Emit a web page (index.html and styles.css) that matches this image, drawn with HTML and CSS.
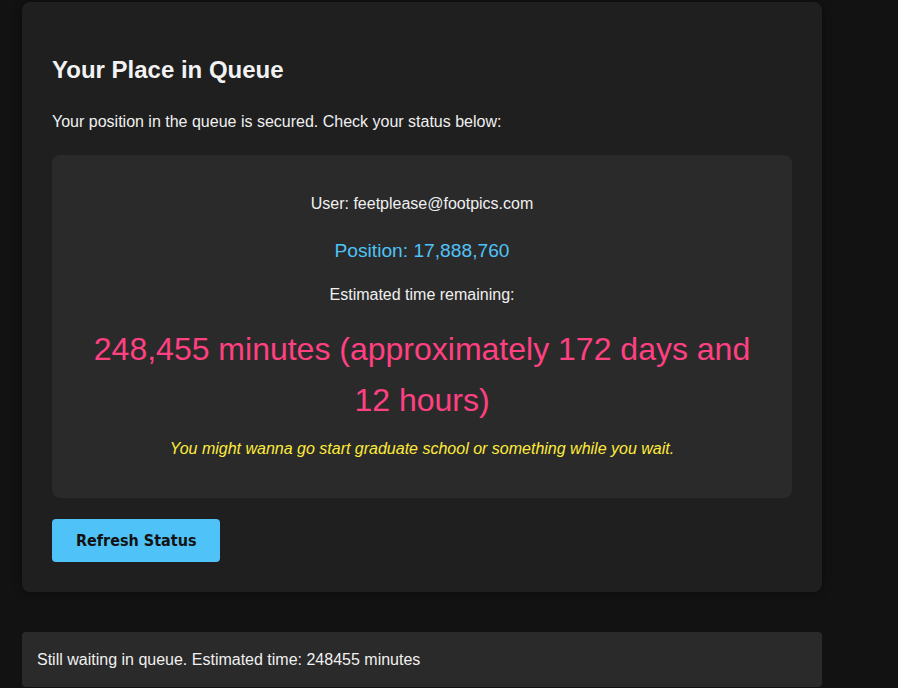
FILE: index.html
```html
<!DOCTYPE html>
<html>
<head>
<meta charset="utf-8">
<link rel="stylesheet" href="styles.css">
</head>
<body>
<div class="page">
  <div class="card">
    <h2 class="title">Your Place in Queue</h2>
    <p class="intro">Your position in the queue is secured. Check your status below:</p>
    <div class="status">
      <p class="user">User: feetplease@footpics.com</p>
      <p class="position">Position: 17,888,760</p>
      <p class="est-label">Estimated time remaining:</p>
      <p class="time">248,455 minutes (approximately 172 days and 12 hours)</p>
      <p class="quip">You might wanna go start graduate school or something while you wait.</p>
    </div>
    <button class="refresh">Refresh Status</button>
  </div>
  <div class="log">Still waiting in queue. Estimated time: 248455 minutes</div>
</div>
</body>
</html>
```
FILE: styles.css
```css
html, body {
  margin: 0;
  padding: 0;
  background: #121212;
}
body {
  font-family: "Liberation Sans", Arial, sans-serif;
  font-size: 16px;
  line-height: 1.6;
  color: #f0f0f0;
}
.page {
  width: 800px;
  padding: 2px 0 0 22px;
}
.card {
  background: #1f1f1f;
  border-radius: 8px;
  padding: 30px;
  box-shadow: 0 0 10px rgba(0, 0, 0, 0.4);
}
.title {
  margin: 19px 0 0;
  font-size: 24px;
  line-height: 1.6;
  font-weight: bold;
  color: #f2f2f2;
}
.intro {
  margin: 20px 0;
}
.status {
  background: #2a2a2a;
  border-radius: 8px;
  padding: 20px;
  text-align: center;
}
.status p {
  margin: 16px 0;
}
.status .position {
  font-size: 19.2px;
  color: #4fc3f7;
  margin: 19px 0 16px;
}
.status .time {
  font-size: 32px;
  line-height: 1.6;
  color: #ff4081;
  margin: 10px 0;
}
.status .quip {
  font-style: italic;
  color: #ffeb3b;
  margin: 10px 0 16px;
}
.refresh {
  display: block;
  margin-top: 21px;
  padding: 12px 24px;
  background: #4fc3f7;
  color: #121212;
  border: none;
  border-radius: 4px;
  font-family: "DejaVu Sans Condensed", "DejaVu Sans", Verdana, sans-serif;
  font-stretch: condensed;
  font-size: 16px;
  line-height: 19px;
  font-weight: bold;
  cursor: pointer;
}
.log {
  margin-top: 40px;
  background: #2a2a2a;
  border-radius: 4px;
  padding: 15px;
  color: #f0f0f0;
}
```
